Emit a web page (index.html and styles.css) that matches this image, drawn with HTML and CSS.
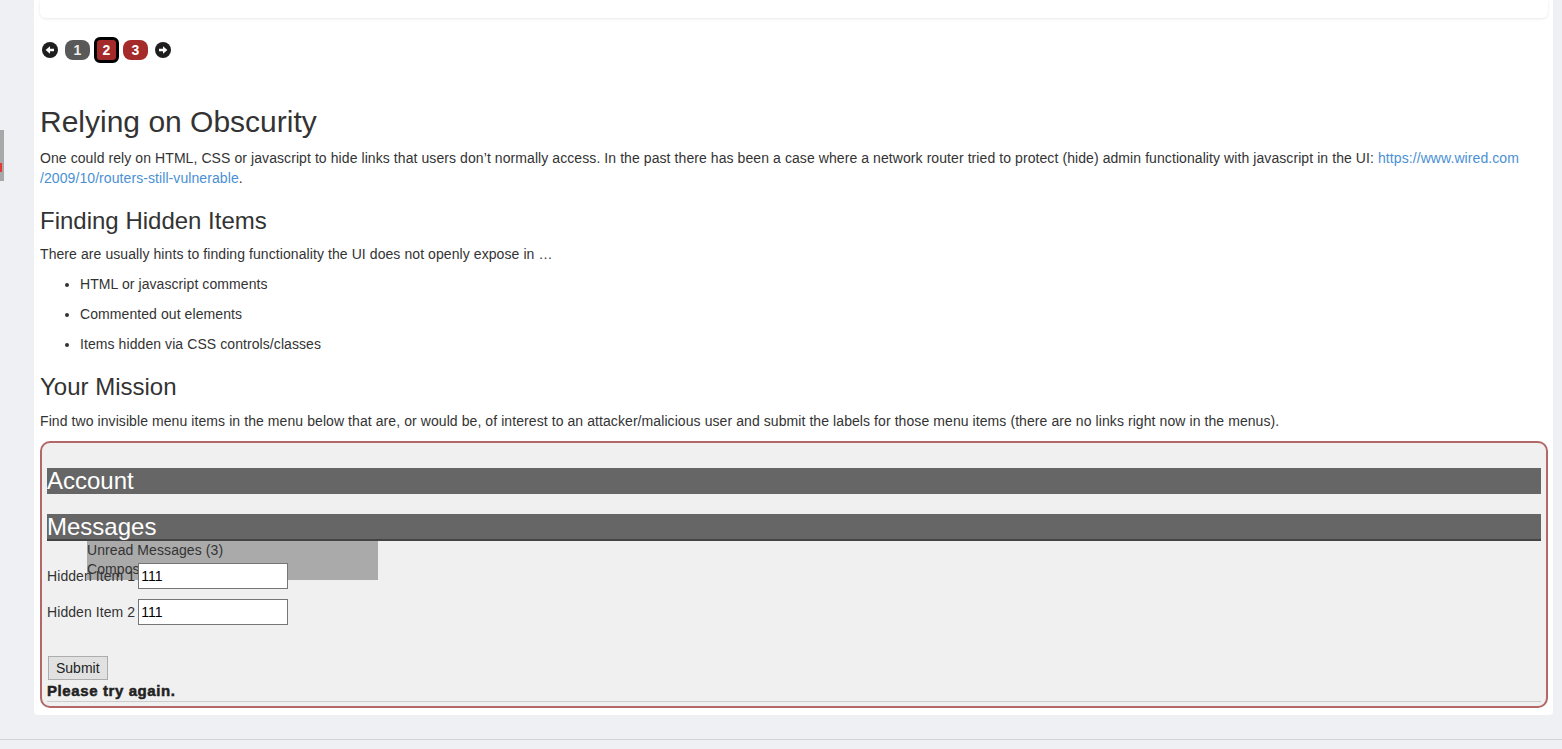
FILE: index.html
```html
<!DOCTYPE html>
<html lang="en">
<head>
  <meta charset="UTF-8">
  <title>Relying on Obscurity</title>
  <link rel="stylesheet" href="styles.css">
</head>
<body>
  <div class="side-tab"><span class="side-mark"></span></div>

  <div class="page">
    <main class="lesson">
      <div class="lesson-top"></div>

      <nav class="lesson-nav">
        <a class="nav-arrow" href="#">
          <svg width="16" height="16" viewBox="0 0 16 16"><circle cx="8" cy="8" r="8" fill="#1e1e1e"/><path d="M12 6.8H8V4.2L3.6 8 8 11.8V9.2h4z" fill="#fff"/></svg>
        </a>
        <a class="page-pill done" href="#">1</a>
        <a class="page-pill current" href="#">2</a>
        <a class="page-pill" href="#">3</a>
        <a class="nav-arrow next" href="#">
          <svg width="16" height="16" viewBox="0 0 16 16"><circle cx="8" cy="8" r="8" fill="#1e1e1e"/><path d="M4 6.8h4V4.2L12.4 8 8 11.8V9.2H4z" fill="#fff"/></svg>
        </a>
      </nav>

      <div class="lesson-content">
        <h2>Relying on Obscurity</h2>
        <p>One could rely on HTML, CSS or javascript to hide links that users don’t normally access. In the past there has been a case where a network router tried to protect (hide) admin functionality with javascript in the UI: <a href="#">https://www.wired.com<wbr>/2009/10/routers-still-vulnerable</a>.</p>

        <h3>Finding Hidden Items</h3>
        <p>There are usually hints to finding functionality the UI does not openly expose in …</p>
        <ul class="hint-list">
          <li>HTML or javascript comments</li>
          <li>Commented out elements</li>
          <li>Items hidden via CSS controls/classes</li>
        </ul>

        <h3>Your Mission</h3>
        <p>Find two invisible menu items in the menu below that are, or would be, of interest to an attacker/malicious user and submit the labels for those menu items (there are no links right now in the menus).</p>

        <div class="attack-box">
          <div class="menu">
            <h3 class="menu-head">Account</h3>
            <div class="menu-group">
              <h3 class="menu-head messages">Messages</h3>
              <ul class="menu-drop">
                <li>Unread Messages (3)</li>
                <li>Compose Message</li>
              </ul>
            </div>
          </div>

          <form class="attack-form" onsubmit="return false">
            <div class="form-row">
              <label for="item1">Hidden Item 1</label>
              <input type="text" id="item1" value="111">
            </div>
            <div class="form-row">
              <label for="item2">Hidden Item 2</label>
              <input type="text" id="item2" value="111">
            </div>
            <button type="submit">Submit</button>
          </form>

          <div class="feedback">Please try again.</div>
          <hr class="box-rule">
        </div>
      </div>
    </main>

    <footer class="page-foot"></footer>
  </div>
</body>
</html>
```

FILE: styles.css
```css
* {
  box-sizing: border-box;
}
body {
  margin: 0;
  background-color: #eff0f4;
  font-family: "Liberation Sans", Arial, Helvetica, sans-serif;
  font-size: 14px;
  line-height: 20px;
  letter-spacing: 0.08px;
  color: #333;
}
.side-tab {
  position: fixed;
  left: 0;
  top: 130px;
  width: 4px;
  height: 51px;
  background: #a8a8a8;
}
.side-mark {
  position: absolute;
  left: 0;
  top: 33px;
  width: 2px;
  height: 9px;
  background: #e53935;
}
.page {
  margin: 0 9px 0 34px;
}
.lesson {
  background: #fff;
  padding: 0 5px 7px 6px;
  border-radius: 0 0 4px 4px;
}
.lesson-top {
  height: 18px;
  background: #fff;
  border-radius: 0 0 6px 6px;
  box-shadow: 0 1px 3px rgba(0,0,0,0.09);
}

/* page navigation */
.lesson-nav {
  display: flex;
  align-items: center;
  height: 26px;
  margin: 19px 0 42px 2px;
  letter-spacing: 0;
}
.nav-arrow {
  display: flex;
  width: 16px;
  height: 16px;
}
.nav-arrow.next {
  margin-left: 7px;
}
.page-pill {
  display: flex;
  align-items: center;
  justify-content: center;
  width: 25px;
  height: 20px;
  margin-left: 4px;
  border-radius: 8px;
  background: #a52a2a;
  color: #fff;
  font-weight: bold;
  font-size: 14px;
  text-decoration: none;
}
.page-pill.done {
  margin-left: 7px;
  background: #595959;
  color: #eee;
}
.page-pill.current {
  width: 25px;
  height: 26px;
  border: 3px solid #000;
  border-radius: 6px;
}

/* lesson text */
.lesson-content h2 {
  font-size: 30px;
  font-weight: normal;
  line-height: 1.1;
  letter-spacing: 0;
  margin: 20px 0 10px;
}
.lesson-content h3 {
  font-size: 24px;
  font-weight: normal;
  line-height: 1.1;
  letter-spacing: 0;
  margin: 20px 0 10px;
}
.lesson-content p {
  margin: 0 0 10px;
}
.lesson-content a {
  color: #4a90d4;
  text-decoration: none;
}
.hint-list {
  margin: 0 0 10px;
  padding-left: 40px;
}
.hint-list li {
  margin-bottom: 10px;
}

/* attack box */
.attack-box {
  background: #f0f0f0;
  border: 2px solid #b36767;
  border-radius: 10px;
  padding: 5px 5px 4px;
}
.attack-box .menu-head {
  margin: 20px 0 10px;
  background: #666;
  color: #fff;
  font-size: 24px;
  line-height: 26px;
}
.menu-group {
  position: relative;
}
.attack-box .menu-head.messages {
  margin-bottom: 0;
  line-height: 25px;
  border-bottom: 2px solid #444;
}
.menu-drop {
  position: absolute;
  top: 100%;
  left: 40px;
  width: 291px;
  margin: 0;
  padding: 0;
  list-style: none;
  background: #aaa;
  color: #333;
  height: 39px;
  line-height: 19px;
  overflow: hidden;
}
.attack-form {
  position: relative;
  z-index: 1;
  padding-top: 22px;
}
.form-row {
  display: flex;
  align-items: center;
  gap: 3px;
  margin-bottom: 10px;
}
.form-row input {
  width: 150px;
  height: 26px;
  padding: 1px 2px;
  border: 1px solid #767676;
  font-family: "Liberation Sans", Arial, sans-serif;
  font-size: 14px;
  color: #000;
  background: #fff;
}
.attack-form button {
  margin: 21px 0 0 1px;
  height: 24px;
  padding: 0 7px;
  background: #e1e1e1;
  border: 1px solid #adadad;
  font-family: "Liberation Sans", Arial, sans-serif;
  font-size: 14px;
  color: #222;
}
.feedback {
  margin-top: 1px;
  font-weight: bold;
  font-size: 15px;
  line-height: 20px;
  letter-spacing: 0.6px;
  -webkit-text-stroke: 0.5px #222;
  color: #222;
}
.box-rule {
  margin: 0;
  border: 0;
  border-top: 1px solid #ccc;
}

.page-foot {
  margin: 24px -9px 0 -34px;
  height: 20px;
  border-top: 1px solid #d3d3d3;
}
```
